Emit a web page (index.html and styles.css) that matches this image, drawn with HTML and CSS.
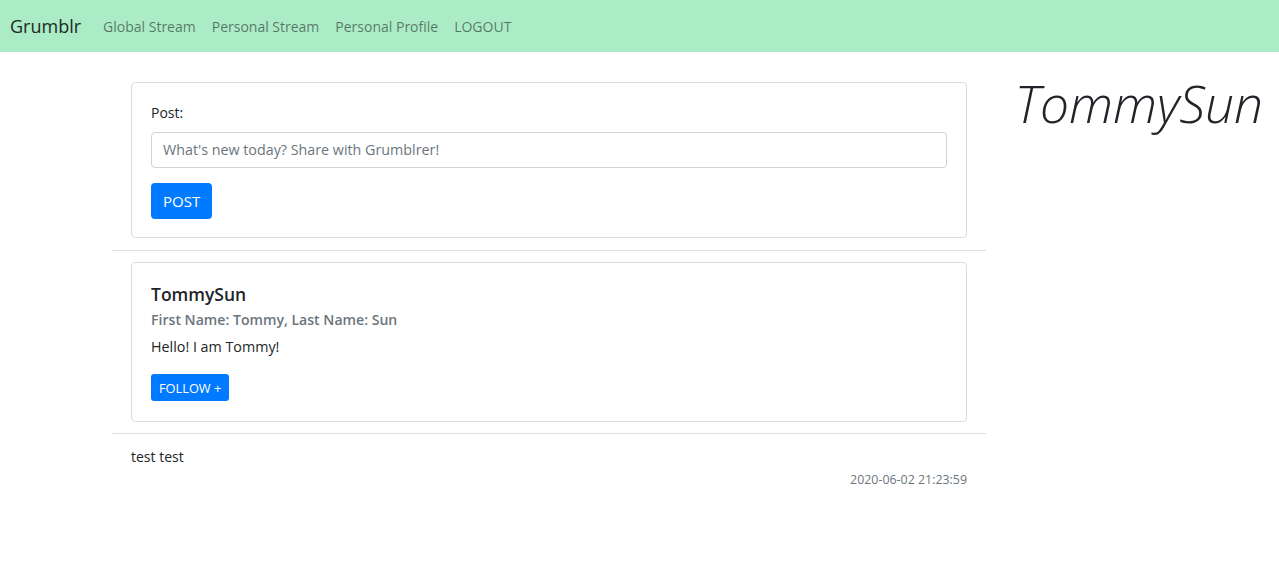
FILE: index.html
```html
<!DOCTYPE html>
<html>
<head>
<meta charset="utf-8">
<link rel="stylesheet" href="styles.css">
</head>
<body>
<nav class="navbar">
  <a class="brand">Grumblr</a>
  <a class="nav-link">Global Stream</a>
  <a class="nav-link">Personal Stream</a>
  <a class="nav-link">Personal Profile</a>
  <a class="nav-link">LOGOUT</a>
</nav>
<div class="page">
  <main class="main">
    <div class="card">
      <label class="label">Post:</label>
      <div class="input">What's new today? Share with Grumblrer!</div>
      <button class="btn">POST</button>
    </div>
    <hr class="rule">
    <div class="card card-profile">
      <div class="card-title">TommySun</div>
      <div class="card-sub">First Name: Tommy, Last Name: Sun</div>
      <p class="card-text">Hello! I am Tommy!</p>
      <button class="btn btn-sm">FOLLOW +</button>
    </div>
    <hr class="rule rule-tight">
    <div class="post">
      <div class="post-text">test test</div>
      <div class="post-time">2020-06-02 21:23:59</div>
    </div>
  </main>
  <aside class="side">
    <h1 class="display">TommySun</h1>
  </aside>
</div>
</body>
</html>
```
FILE: styles.css
```css
* { box-sizing: border-box; }
body {
  margin: 0;
  font-family: "Open Sans", "Noto Sans", sans-serif;
  font-size: 14.3px;
  color: #212529;
  background: #fff;
}
.navbar {
  background: #abebc6;
  height: 52px;
  display: flex;
  align-items: center;
  padding: 0 10px;
}
.brand {
  font-size: 18px;
  color: #1d2a22;
  margin-right: 22px;
}
.nav-link {
  font-size: 14px;
  color: rgba(0,0,0,0.5);
  margin-right: 16px;
}
.page {
  display: flex;
  padding-top: 30px;
}
.main {
  margin-left: 112px;
  width: 874px;
}
.card {
  margin: 0 19px;
  border: 1px solid #dcdcdc;
  border-radius: 4px;
  padding: 20px 19px 18px;
}
.card-profile {
  padding-bottom: 20px;
}
.label {
  display: block;
  font-size: 14px;
  margin-bottom: 10px;
}
.input {
  height: 36px;
  border: 1px solid #ced4da;
  border-radius: 4px;
  padding: 0 11px;
  line-height: 34px;
  color: #6c757d;
  font-size: 14.3px;
  margin-bottom: 15px;
}
.btn {
  display: block;
  background: #007bff;
  color: #fff;
  border: 0;
  border-radius: 4px;
  font-family: inherit;
  font-size: 15px;
  height: 36px;
  padding: 0 12px;
}
.btn-sm {
  font-size: 12.8px;
  height: 27px;
  padding: 0 8px;
  border-radius: 3px;
}
.rule {
  border: 0;
  border-top: 1px solid #dedede;
  margin: 12px 0 11px;
}
.rule-tight {
  margin-top: 11px;
}
.card-title {
  font-size: 17.5px;
  font-weight: 600;
  line-height: 22px;
  margin-top: 0;
}
.card-sub {
  font-size: 14.1px;
  font-weight: 600;
  color: #6c757d;
  line-height: 22px;
  margin-top: 4px;
  margin-bottom: 5px;
}
.card-text {
  margin: 0 0 16px;
  font-size: 14.3px;
  line-height: 22px;
}
.post {
  padding: 0 19px;
}
.post-text {
  font-size: 14px;
  line-height: 24px;
  padding-top: 0;
}
.post-time {
  text-align: right;
  font-size: 12.4px;
  color: #6c757d;
  line-height: 18px;
  margin-top: 2px;
}
.side {
  flex: 1;
  text-align: right;
  padding-right: 16px;
}
.display {
  margin: -9px 0 0;
  font-size: 51.5px;
  font-weight: 300;
  font-style: italic;
  line-height: 1.2;
  color: #212529;
}
```
